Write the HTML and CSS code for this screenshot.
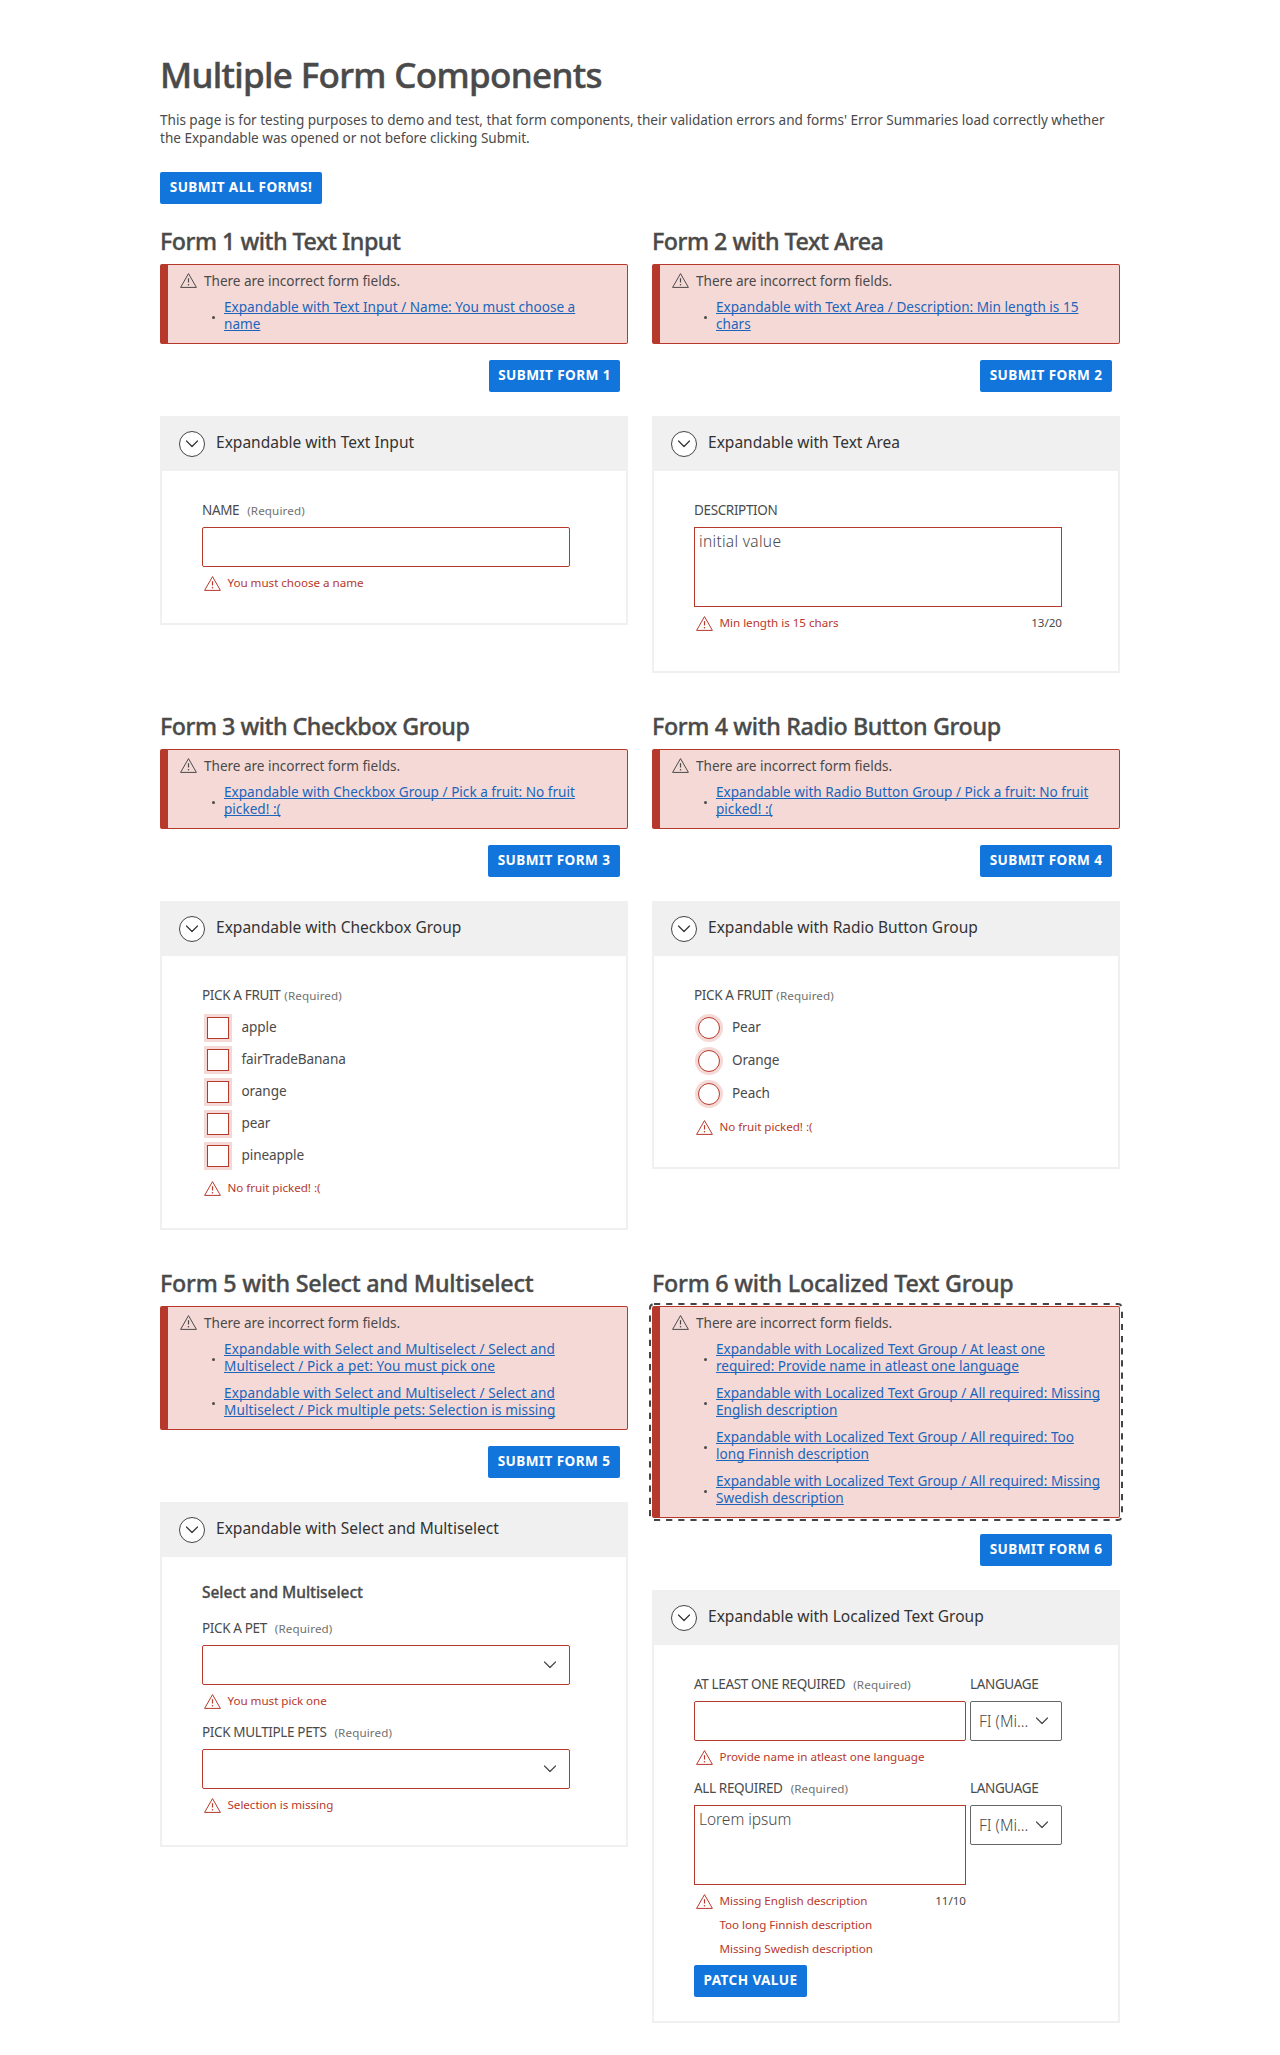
FILE: index.html
```html
<!DOCTYPE html>
<html lang="en">
<head>
<meta charset="utf-8">
<title>Multiple Form Components</title>
<link rel="stylesheet" href="styles.css">
</head>
<body>
<svg class="defs" width="0" height="0" aria-hidden="true">
  <symbol id="warn" viewBox="0 0 17 15"><path d="M8.5.6 16.4 14.4H.6Z" fill="none" stroke="currentColor" stroke-linejoin="round"/><path d="M8.5 5.2v4.3" stroke="currentColor" stroke-width="1.2"/><circle cx="8.5" cy="11.8" r=".8" fill="currentColor"/></symbol>
  <symbol id="chev" viewBox="0 0 12 8"><path d="M.5 1 6 6.5 11.5 1" fill="none" stroke="currentColor" stroke-width="1.2" stroke-linecap="round" stroke-linejoin="round"/></symbol>
</svg>
<main class="page">
  <h1>Multiple Form Components</h1>
  <p class="intro">This page is for testing purposes to demo and test, that form components, their validation errors and forms' Error Summaries load correctly whether<br>the Expandable was opened or not before clicking Submit.</p>
  <button class="btn">SUBMIT ALL FORMS!</button>

  <div class="grid">
    <form class="form">
      <h2 class="tight">Form 1 with Text Input</h2>
      <div class="alert">
        <div class="alert-title"><svg class="warn"><use href="#warn"/></svg>There are incorrect form fields.</div>
        <ul>
          <li><a href="#">Expandable with Text Input / Name: You must choose a<br>name</a></li>
        </ul>
      </div>
      <div class="actions"><button class="btn btn-one">SUBMIT FORM 1</button></div>
      <section class="card">
        <header><span class="toggle"><svg class="chev"><use href="#chev"/></svg></span>Expandable with Text Input</header>
        <div class="body">
          <div class="field">
            <label>NAME <small>(Required)</small></label>
            <div class="input"></div>
            <div class="error"><svg class="warn"><use href="#warn"/></svg>You must choose a name</div>
          </div>
        </div>
      </section>
    </form>

    <form class="form">
      <h2 class="tight">Form 2 with Text Area</h2>
      <div class="alert">
        <div class="alert-title"><svg class="warn"><use href="#warn"/></svg>There are incorrect form fields.</div>
        <ul>
          <li><a href="#">Expandable with Text Area / Description: Min length is 15<br>chars</a></li>
        </ul>
      </div>
      <div class="actions"><button class="btn">SUBMIT FORM 2</button></div>
      <section class="card">
        <header><span class="toggle"><svg class="chev"><use href="#chev"/></svg></span>Expandable with Text Area</header>
        <div class="body body-area">
          <div class="field">
            <label>DESCRIPTION</label>
            <div class="textarea loose">initial value</div>
            <div class="error"><svg class="warn"><use href="#warn"/></svg>Min length is 15 chars<span class="count">13/20</span></div>
          </div>
        </div>
      </section>
    </form>

    <form class="form">
      <h2 class="tight">Form 3 with Checkbox Group</h2>
      <div class="alert">
        <div class="alert-title"><svg class="warn"><use href="#warn"/></svg>There are incorrect form fields.</div>
        <ul>
          <li><a href="#">Expandable with Checkbox Group / Pick a fruit: No fruit<br>picked! :(</a></li>
        </ul>
      </div>
      <div class="actions"><button class="btn">SUBMIT FORM 3</button></div>
      <section class="card">
        <header><span class="toggle"><svg class="chev"><use href="#chev"/></svg></span>Expandable with Checkbox Group</header>
        <div class="body">
          <div class="legend">PICK A FRUIT <small>(Required)</small></div>
          <div class="options">
            <div class="option"><span class="box"></span>apple</div>
            <div class="option"><span class="box"></span>fairTradeBanana</div>
            <div class="option"><span class="box"></span>orange</div>
            <div class="option"><span class="box"></span>pear</div>
            <div class="option"><span class="box"></span>pineapple</div>
          </div>
          <div class="error"><svg class="warn"><use href="#warn"/></svg>No fruit picked! :(</div>
        </div>
      </section>
    </form>

    <form class="form">
      <h2 class="snug">Form 4 with Radio Button Group</h2>
      <div class="alert">
        <div class="alert-title"><svg class="warn"><use href="#warn"/></svg>There are incorrect form fields.</div>
        <ul>
          <li><a href="#">Expandable with Radio Button Group / Pick a fruit: No fruit<br>picked! :(</a></li>
        </ul>
      </div>
      <div class="actions"><button class="btn">SUBMIT FORM 4</button></div>
      <section class="card">
        <header><span class="toggle"><svg class="chev"><use href="#chev"/></svg></span>Expandable with Radio Button Group</header>
        <div class="body">
          <div class="legend">PICK A FRUIT <small>(Required)</small></div>
          <div class="options options-radio">
            <div class="option"><span class="box radio"></span>Pear</div>
            <div class="option"><span class="box radio"></span>Orange</div>
            <div class="option"><span class="box radio"></span>Peach</div>
          </div>
          <div class="error"><svg class="warn"><use href="#warn"/></svg>No fruit picked! :(</div>
        </div>
      </section>
    </form>

    <form class="form">
      <h2>Form 5 with Select and Multiselect</h2>
      <div class="alert">
        <div class="alert-title"><svg class="warn"><use href="#warn"/></svg>There are incorrect form fields.</div>
        <ul class="loose">
          <li><a href="#">Expandable with Select and Multiselect / Select and<br>Multiselect / Pick a pet: You must pick one</a></li>
          <li><a href="#">Expandable with Select and Multiselect / Select and<br>Multiselect / Pick multiple pets: Selection is missing</a></li>
        </ul>
      </div>
      <div class="actions"><button class="btn">SUBMIT FORM 5</button></div>
      <section class="card">
        <header><span class="toggle"><svg class="chev"><use href="#chev"/></svg></span>Expandable with Select and Multiselect</header>
        <div class="body body-select">
          <h3>Select and Multiselect</h3>
          <div class="field">
            <label>PICK A PET <small>(Required)</small></label>
            <div class="input select"><svg class="chev"><use href="#chev"/></svg></div>
            <div class="error"><svg class="warn"><use href="#warn"/></svg>You must pick one</div>
          </div>
          <div class="field">
            <label>PICK MULTIPLE PETS <small>(Required)</small></label>
            <div class="input select"><svg class="chev"><use href="#chev"/></svg></div>
            <div class="error"><svg class="warn"><use href="#warn"/></svg>Selection is missing</div>
          </div>
        </div>
      </section>
    </form>

    <form class="form">
      <h2>Form 6 with Localized Text Group</h2>
      <div class="alert focused">
        <svg class="focus-ring" width="474" height="218"><rect x="1" y="1" width="472" height="216" rx="4"/></svg>
        <div class="alert-title"><svg class="warn"><use href="#warn"/></svg>There are incorrect form fields.</div>
        <ul>
          <li><a href="#">Expandable with Localized Text Group / At least one<br>required: Provide name in atleast one language</a></li>
          <li><a href="#">Expandable with Localized Text Group / All required: Missing<br>English description</a></li>
          <li><a href="#">Expandable with Localized Text Group / All required: Too<br>long Finnish description</a></li>
          <li><a href="#">Expandable with Localized Text Group / All required: Missing<br>Swedish description</a></li>
        </ul>
      </div>
      <div class="actions"><button class="btn">SUBMIT FORM 6</button></div>
      <section class="card">
        <header><span class="toggle"><svg class="chev"><use href="#chev"/></svg></span>Expandable with Localized Text Group</header>
        <div class="body body-local">
          <div class="localized">
            <div class="field">
              <label>AT LEAST ONE REQUIRED <small>(Required)</small></label>
              <div class="input"></div>
              <div class="error"><svg class="warn"><use href="#warn"/></svg>Provide name in atleast one language</div>
            </div>
            <div class="field">
              <label>LANGUAGE</label>
              <div class="input select lang">FI (Mi...<svg class="chev"><use href="#chev"/></svg></div>
            </div>
          </div>
          <div class="localized">
            <div class="field">
              <label>ALL REQUIRED <small>(Required)</small></label>
              <div class="textarea">Lorem ipsum</div>
              <div class="error"><svg class="warn"><use href="#warn"/></svg>Missing English description<span class="count">11/10</span></div>
              <div class="error more">Too long Finnish description</div>
              <div class="error more">Missing Swedish description</div>
            </div>
            <div class="field">
              <label>LANGUAGE</label>
              <div class="input select lang">FI (Mi...<svg class="chev"><use href="#chev"/></svg></div>
            </div>
          </div>
          <button class="btn btn-patch">PATCH VALUE</button>
        </div>
      </section>
    </form>
  </div>
</main>
</body>
</html>
```
FILE: styles.css
```css
:root {
  --text: #4a4a4a;
  --red: #b7392b;
  --pink: #f5d9d6;
  --blue: #1275dc;
  --grey: #f0f0f0;
}

* { box-sizing: border-box; }

body {
  margin: 0;
  background: #fff;
  color: var(--text);
  font: 400 13.58px/18px "Noto Sans", "Open Sans", sans-serif;
  letter-spacing: -0.03px;
}

.defs { display: block; }

.page {
  width: 960px;
  margin: 0 auto;
  padding-top: 55px;
}

h1, h2, h3, p, ul { margin: 0; padding: 0; }

h1 {
  font-size: 35px;
  line-height: 40px;
  font-weight: 500;
  letter-spacing: -0.67px;
  -webkit-text-stroke: 0.5px currentColor;
}

.intro {
  margin: 16px 0 25px;
  letter-spacing: -0.021px;
  white-space: nowrap;
}

.btn {
  display: flex;
  align-items: center;
  justify-content: center;
  width: 132px;
  height: 32px;
  padding: 0 0 2px;
  border: 0;
  border-radius: 2px;
  background: var(--blue);
  color: #fff;
  font: 700 13.58px/20px "Noto Sans", sans-serif;
  letter-spacing: 0.4px;
  white-space: nowrap;
}

.page > .btn { width: 162px; }
.btn-one { width: 131px; }
.btn-patch { width: 113px; margin-top: 7px; }

.grid {
  display: grid;
  grid-template-columns: 468px 468px;
  gap: 37px 24px;
  align-items: start;
  margin-top: 21px;
}

h2 {
  margin-bottom: 7px;
  font-size: 23.3px;
  line-height: 32px;
  font-weight: 500;
  letter-spacing: -0.24px;
  -webkit-text-stroke: 0.35px currentColor;
}

.tight { letter-spacing: -0.5px; }
.snug { letter-spacing: -0.37px; }

.alert {
  padding: 6px 0 11px 12px;
  border: 1px solid var(--red);
  border-left-width: 8px;
  border-radius: 2px;
  background: var(--pink);
}

.focused { position: relative; }

/* The ring lies 1px outside the alert's border */
.focus-ring {
  position: absolute;
  top: -4px;
  left: -11px;
  pointer-events: none;
}

.focus-ring rect {
  fill: none;
  stroke: #444;
  stroke-width: 2;
  stroke-dasharray: 6.2 5.95;
}

.alert-title {
  display: flex;
  gap: 7px;
  line-height: 20px;
}

.warn {
  flex: none;
  width: 17px;
  height: 15px;
  margin-top: 2px;
}

ul {
  display: grid;
  gap: 10px;
  margin-top: 7px;
  list-style: none;
}

li {
  display: flex;
  align-items: center;
  gap: 9px;
  padding-left: 32px;
  line-height: 17px;
  letter-spacing: 0.01px;
  white-space: nowrap;
}

.loose li { letter-spacing: 0.11px; }

li::before {
  content: "";
  width: 3px;
  height: 3px;
  margin-top: 4px;
  border-radius: 50%;
  background: var(--text);
}

a {
  color: #1b65bb;
  text-decoration: underline;
  text-decoration-thickness: 1px;
  text-underline-offset: 1px;
  text-decoration-skip-ink: none;
}

.actions {
  display: flex;
  justify-content: flex-end;
  padding: 16px 8px 24px 0;
}

.card {
  border: 2px solid var(--grey);
  border-top: 0;
}

.card header {
  display: flex;
  gap: 11px;
  height: 55px;
  padding: 15px 17px 0;
  background: var(--grey);
  color: #333;
  font-size: 15.52px;
  line-height: 22px;
  letter-spacing: 0;
}

.toggle {
  display: flex;
  align-items: center;
  justify-content: center;
  width: 26px;
  height: 26px;
  border: 1px solid #444;
  border-radius: 50%;
  background: #fff;
}

.chev {
  flex: none;
  width: 12px;
  height: 8px;
}

.body { padding: 29px 56px 31px 40px; }
.body-area { padding-bottom: 39px; }
.body-select { padding-top: 24px; }
.body-local { padding-bottom: 24px; }

h3 {
  margin-bottom: 15px;
  font-size: 15.52px;
  line-height: 22px;
  font-weight: 500;
  letter-spacing: -0.037px;
  -webkit-text-stroke: 0.3px currentColor;
}

.field + .field, .localized + .localized { margin-top: 12px; }

.field { width: 100%; }

label, .legend {
  display: flex;
  align-items: baseline;
  gap: 8px;
  height: 20px;
  margin-bottom: 7px;
  font-size: 13.5px;
  line-height: 20px;
  letter-spacing: -0.36px;
  white-space: nowrap;
}

.legend { gap: 4px; margin-bottom: 9px; }

small {
  color: #717171;
  font-size: 11.64px;
  letter-spacing: 0.12px;
}

.input {
  height: 40px;
  border: 1px solid var(--red);
  border-radius: 2px;
}

.textarea {
  height: 80px;
  padding: 3px 4px;
  border: 1px solid var(--red);
  font-size: 15.52px;
  font-weight: 300;
  line-height: 21px;
}

.textarea.loose { letter-spacing: 0.3px; }

.select {
  display: flex;
  align-items: center;
  justify-content: flex-end;
  padding-right: 13px;
}

.lang {
  justify-content: space-between;
  padding-left: 8px;
  border-color: #666;
  font-size: 15.52px;
  font-weight: 300;
}

.error {
  display: flex;
  gap: 7px;
  height: 20px;
  margin-top: 5px;
  padding-left: 1.5px;
  color: var(--red);
  font-size: 11.64px;
  line-height: 22px;
  white-space: nowrap;
}

.error .warn { margin-top: 4px; }
.more { margin-top: 4px; padding-left: 25.5px; }

.count {
  margin-left: auto;
  color: var(--text);
}

.options {
  display: grid;
  gap: 4px;
  padding-left: 2px;
}

.options-radio { gap: 5px; padding-left: 0.5px; }
.options + .error { margin-top: 7px; }
.options-radio + .error { margin-top: 8px; }

.option {
  display: flex;
  gap: 10px;
  height: 28px;
  line-height: 26px;
  letter-spacing: -0.1px;
}

.box {
  width: 22px;
  height: 22px;
  margin: 3px;
  margin-right: 2.5px;
  border: 1px solid var(--red);
  background: #fff;
  box-shadow: 0 0 0 3px var(--pink);
}

.radio { border-radius: 50%; }

.localized {
  display: grid;
  grid-template-columns: 272px 92px;
  gap: 4px;
}

.localized .field { margin-top: 0; }
```
